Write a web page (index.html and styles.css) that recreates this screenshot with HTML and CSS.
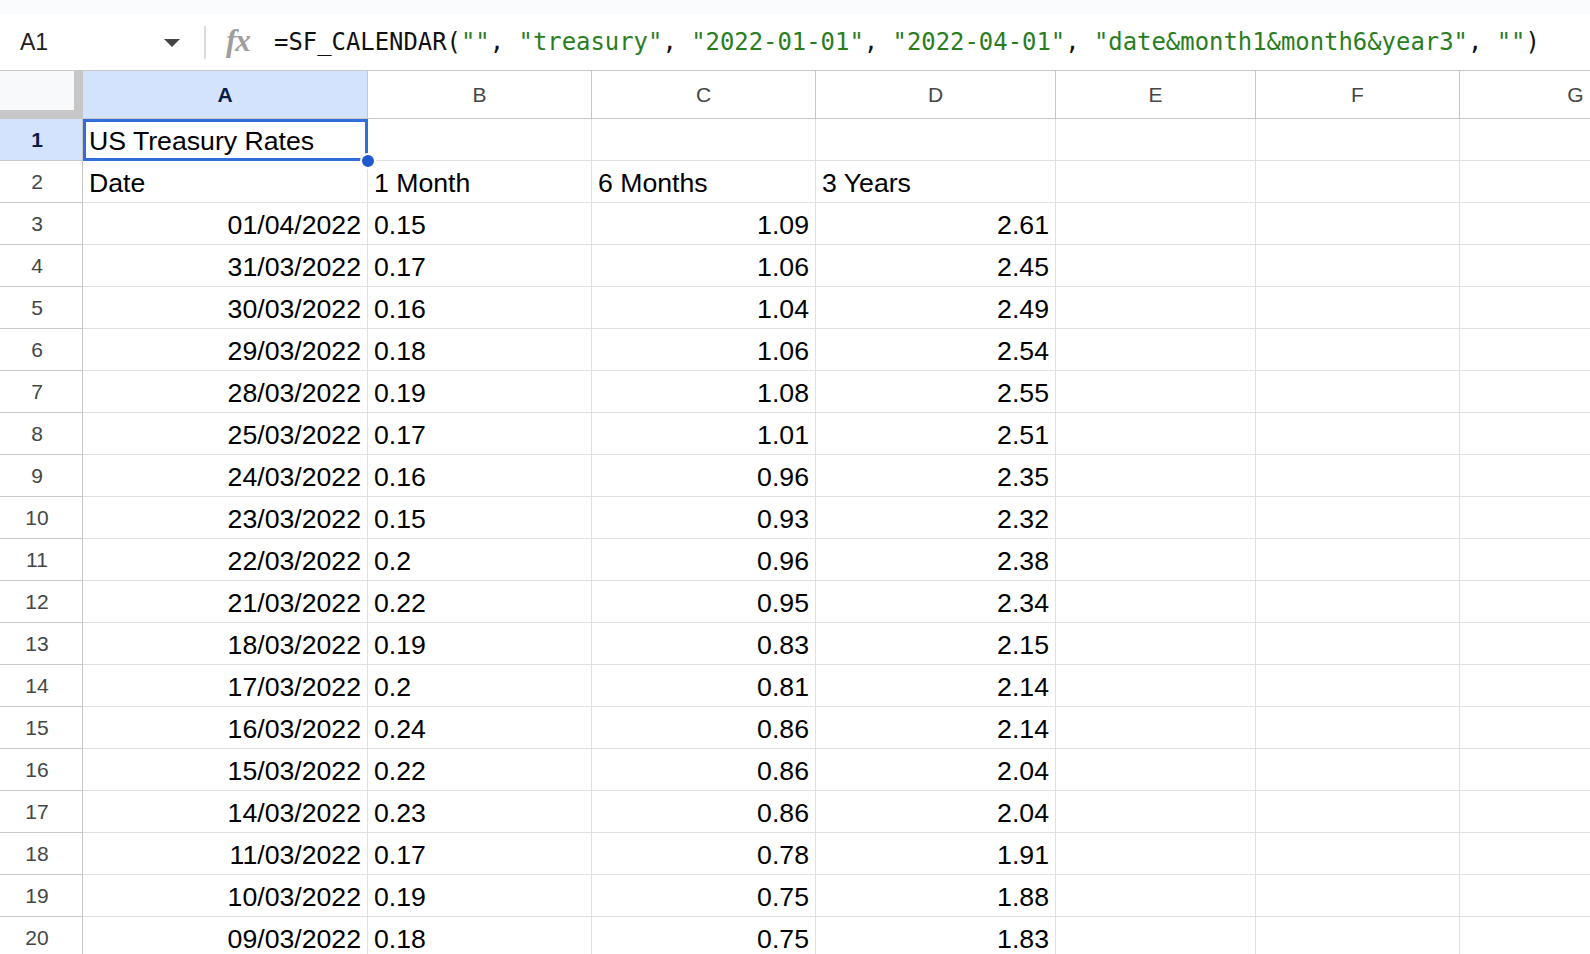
FILE: index.html
```html
<!DOCTYPE html>
<html lang="en">
<head>
  <meta charset="UTF-8">
  <title>US Treasury Rates - Sheet</title>
  <link rel="stylesheet" href="styles.css">
</head>
<body>
  <div class="topband"></div>

  <div class="formula-bar">
    <div class="name-box">
      <span class="ref">A1</span>
      <span class="caret"></span>
    </div>
    <div class="sep"></div>
    <div class="fx">fx</div>
    <div class="formula">=SF_CALENDAR(<span class="str">""</span>, <span class="str">"treasury"</span>, <span class="str">"2022-01-01"</span>, <span class="str">"2022-04-01"</span>, <span class="str">"date&amp;month1&amp;month6&amp;year3"</span>, <span class="str">""</span>)</div>
  </div>

  <div class="sheet">
    <div class="row head">
      <div class="corner"><div class="corner-in"></div></div>
      <div class="ch sel">A</div>
      <div class="ch">B</div>
      <div class="ch">C</div>
      <div class="ch">D</div>
      <div class="ch">E</div>
      <div class="ch">F</div>
      <div class="ch">G</div>
    </div>

    <div class="row">
      <div class="rh sel">1</div>
      <div class="c active">US Treasury Rates<span class="sel-box"></span><span class="handle"></span></div>
      <div class="c"></div><div class="c"></div><div class="c"></div><div class="c"></div><div class="c"></div><div class="c"></div>
    </div>
    <div class="row">
      <div class="rh">2</div>
      <div class="c">Date</div><div class="c">1 Month</div><div class="c">6 Months</div><div class="c">3 Years</div>
      <div class="c"></div><div class="c"></div><div class="c"></div>
    </div>
    <div class="row">
      <div class="rh">3</div>
      <div class="c r">01/04/2022</div><div class="c">0.15</div><div class="c r">1.09</div><div class="c r">2.61</div>
      <div class="c"></div><div class="c"></div><div class="c"></div>
    </div>
    <div class="row">
      <div class="rh">4</div>
      <div class="c r">31/03/2022</div><div class="c">0.17</div><div class="c r">1.06</div><div class="c r">2.45</div>
      <div class="c"></div><div class="c"></div><div class="c"></div>
    </div>
    <div class="row">
      <div class="rh">5</div>
      <div class="c r">30/03/2022</div><div class="c">0.16</div><div class="c r">1.04</div><div class="c r">2.49</div>
      <div class="c"></div><div class="c"></div><div class="c"></div>
    </div>
    <div class="row">
      <div class="rh">6</div>
      <div class="c r">29/03/2022</div><div class="c">0.18</div><div class="c r">1.06</div><div class="c r">2.54</div>
      <div class="c"></div><div class="c"></div><div class="c"></div>
    </div>
    <div class="row">
      <div class="rh">7</div>
      <div class="c r">28/03/2022</div><div class="c">0.19</div><div class="c r">1.08</div><div class="c r">2.55</div>
      <div class="c"></div><div class="c"></div><div class="c"></div>
    </div>
    <div class="row">
      <div class="rh">8</div>
      <div class="c r">25/03/2022</div><div class="c">0.17</div><div class="c r">1.01</div><div class="c r">2.51</div>
      <div class="c"></div><div class="c"></div><div class="c"></div>
    </div>
    <div class="row">
      <div class="rh">9</div>
      <div class="c r">24/03/2022</div><div class="c">0.16</div><div class="c r">0.96</div><div class="c r">2.35</div>
      <div class="c"></div><div class="c"></div><div class="c"></div>
    </div>
    <div class="row">
      <div class="rh">10</div>
      <div class="c r">23/03/2022</div><div class="c">0.15</div><div class="c r">0.93</div><div class="c r">2.32</div>
      <div class="c"></div><div class="c"></div><div class="c"></div>
    </div>
    <div class="row">
      <div class="rh">11</div>
      <div class="c r">22/03/2022</div><div class="c">0.2</div><div class="c r">0.96</div><div class="c r">2.38</div>
      <div class="c"></div><div class="c"></div><div class="c"></div>
    </div>
    <div class="row">
      <div class="rh">12</div>
      <div class="c r">21/03/2022</div><div class="c">0.22</div><div class="c r">0.95</div><div class="c r">2.34</div>
      <div class="c"></div><div class="c"></div><div class="c"></div>
    </div>
    <div class="row">
      <div class="rh">13</div>
      <div class="c r">18/03/2022</div><div class="c">0.19</div><div class="c r">0.83</div><div class="c r">2.15</div>
      <div class="c"></div><div class="c"></div><div class="c"></div>
    </div>
    <div class="row">
      <div class="rh">14</div>
      <div class="c r">17/03/2022</div><div class="c">0.2</div><div class="c r">0.81</div><div class="c r">2.14</div>
      <div class="c"></div><div class="c"></div><div class="c"></div>
    </div>
    <div class="row">
      <div class="rh">15</div>
      <div class="c r">16/03/2022</div><div class="c">0.24</div><div class="c r">0.86</div><div class="c r">2.14</div>
      <div class="c"></div><div class="c"></div><div class="c"></div>
    </div>
    <div class="row">
      <div class="rh">16</div>
      <div class="c r">15/03/2022</div><div class="c">0.22</div><div class="c r">0.86</div><div class="c r">2.04</div>
      <div class="c"></div><div class="c"></div><div class="c"></div>
    </div>
    <div class="row">
      <div class="rh">17</div>
      <div class="c r">14/03/2022</div><div class="c">0.23</div><div class="c r">0.86</div><div class="c r">2.04</div>
      <div class="c"></div><div class="c"></div><div class="c"></div>
    </div>
    <div class="row">
      <div class="rh">18</div>
      <div class="c r">11/03/2022</div><div class="c">0.17</div><div class="c r">0.78</div><div class="c r">1.91</div>
      <div class="c"></div><div class="c"></div><div class="c"></div>
    </div>
    <div class="row">
      <div class="rh">19</div>
      <div class="c r">10/03/2022</div><div class="c">0.19</div><div class="c r">0.75</div><div class="c r">1.88</div>
      <div class="c"></div><div class="c"></div><div class="c"></div>
    </div>
    <div class="row">
      <div class="rh">20</div>
      <div class="c r">09/03/2022</div><div class="c">0.18</div><div class="c r">0.75</div><div class="c r">1.83</div>
      <div class="c"></div><div class="c"></div><div class="c"></div>
    </div>
  </div>
</body>
</html>
```

FILE: styles.css
```css
:root {
  --head-line: #c7c7c7;
  --grid-line: #e1e1e1;
  --sel-bg: #d3e3fd;
  --sel-text: #0b1d47;
  --sel-blue: #2f6fdc;
  --head-text: #444746;
  --cols: 83px 285px 224px 224px 240px 200px 204px 232px;
}
* { box-sizing: border-box; }
html, body {
  margin: 0;
  height: 954px;
  overflow: hidden;
  background: #fff;
}
body {
  font-family: 'Liberation Sans', Arial, sans-serif;
  color: #000;
}

.topband {
  height: 14px;
  background: #f9fbfd;
}

/* formula bar */
.formula-bar {
  display: flex;
  align-items: center;
  height: 57px;
  border-bottom: 1px solid var(--head-line);
}
.name-box {
  display: flex;
  align-items: center;
  justify-content: space-between;
  width: 204px;
  padding: 0 24px 0 20px;
  font-size: 23px;
  color: #1f1f1f;
}
.caret {
  width: 0;
  height: 0;
  border-left: 8px solid transparent;
  border-right: 8px solid transparent;
  border-top: 8px solid #444;
  margin-top: 2px;
}
.sep {
  width: 2px;
  height: 33px;
  background: #dcdcdc;
}
.fx {
  margin-left: 20px;
  width: 30px;
  font-family: 'Liberation Serif', serif;
  font-style: italic;
  font-weight: bold;
  font-size: 31px;
  color: #9e9e9e;
  letter-spacing: -1px;
  margin-top: -2px;
}
.formula {
  margin-left: 18px;
  font-family: 'DejaVu Sans Mono', 'Liberation Mono', monospace;
  font-size: 23.9px;
  white-space: pre;
  color: #111;
}
.formula .str { color: #2a7d1f; }

/* grid */
.sheet {
  width: 1692px;
}
.row {
  display: grid;
  grid-template-columns: var(--cols);
}
.corner {
  height: 48px;
  background: var(--head-line);
  border-bottom: 1px solid var(--head-line);
}
.corner-in {
  width: 74px;
  height: 39px;
  background: #f8f9fa;
}
.ch {
  height: 48px;
  line-height: 47px;
  text-align: center;
  font-size: 21px;
  color: var(--head-text);
  border-right: 1px solid var(--head-line);
  border-bottom: 1px solid var(--head-line);
}
.rh {
  height: 42px;
  line-height: 41px;
  padding-right: 8px;
  text-align: center;
  font-size: 21px;
  color: var(--head-text);
  border-right: 1px solid var(--head-line);
  border-bottom: 1px solid var(--head-line);
}
.ch.sel, .rh.sel {
  background: var(--sel-bg);
  color: var(--sel-text);
  font-weight: bold;
}
.c {
  height: 42px;
  line-height: 41px;
  padding: 2px 6px 0;
  font-size: 26.67px;
  white-space: nowrap;
  border-right: 1px solid var(--grid-line);
  border-bottom: 1px solid var(--grid-line);
}
.c.r { text-align: right; }

.c.active { position: relative; }
.sel-box {
  position: absolute;
  left: 0;
  top: 0;
  right: -1px;
  bottom: -1px;
  border: 3px solid var(--sel-blue);
}
.handle {
  position: absolute;
  right: -9px;
  bottom: -9px;
  width: 16px;
  height: 16px;
  border-radius: 50%;
  background: #1f58cf;
  border: 2px solid #fff;
  z-index: 2;
}
```
